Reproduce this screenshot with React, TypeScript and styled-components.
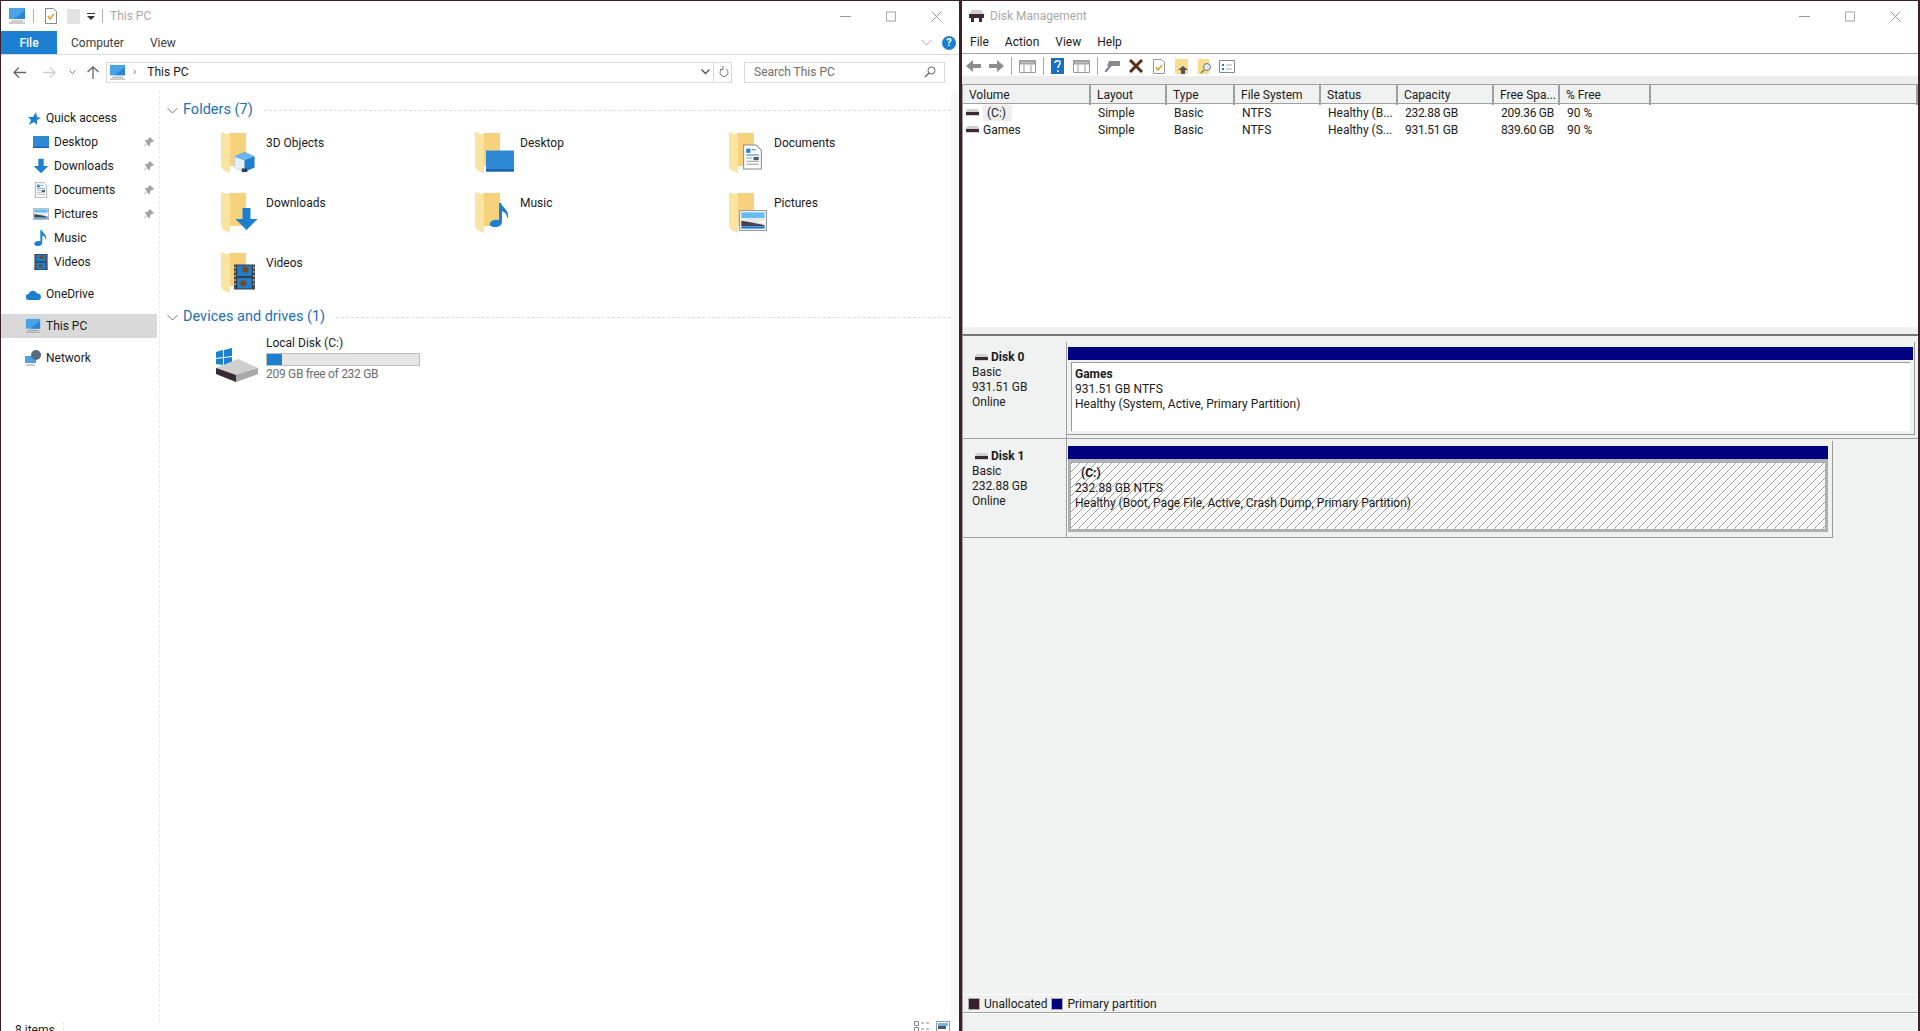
import React from 'react';
import styled, { createGlobalStyle } from 'styled-components';

const UI_FONT = '"Roboto", "Noto Sans", "Liberation Sans", sans-serif';
const EDGE = '#3b1f2b';
const LINE = '#a0a0a0';
const PANEL = '#f0f1f1';
const ACCENT = '#1c7fd0';

const GlobalStyle = createGlobalStyle`
  html, body { margin: 0; padding: 0; background: #fff; overflow: hidden; }
  body { font: 12px/16px ${UI_FONT}; color: #1b1b1b; }
  * { box-sizing: border-box; }
  svg { display: block; flex: none; }
`;

const Desk = styled.div`
  display: flex;
  width: 1920px;
  height: 1031px;
  overflow: hidden;
  background: ${EDGE};
`;

/* ---------- shared title bar ---------- */

const TitleBar = styled.div`
  display: flex;
  align-items: center;
  height: 30px;
  flex: none;
  background: #fff;
`;

const TitleText = styled.span<{ $left: number }>`
  color: #a9a9a9;
  margin-left: ${(p) => p.$left}px;
`;

const Controls = styled.div<{ $right: number }>`
  margin-left: auto;
  margin-right: ${(p) => p.$right}px;
  display: flex;
  gap: 35px;
  align-items: center;
`;

const TitleSep = styled.i`
  width: 1px;
  height: 14px;
  background: #b5b5b5;
  margin: 0 7px;
`;

const WindowControls = ({ right }: { right: number }) => (
  <Controls $right={right}>
    <svg width="11" height="11" viewBox="0 0 11 11"><path d="M0 5.5h11" stroke="#9a9a9a" /></svg>
    <svg width="10" height="11" viewBox="0 0 11 11"><path d="M.5.5h10v10H.5z" fill="none" stroke="#9a9a9a" /></svg>
    <svg width="11" height="11" viewBox="0 0 11 11"><path d="M.5.5l10 10M10.5.5l-10 10" stroke="#9a9a9a" /></svg>
  </Controls>
);

/* ---------- icons ---------- */

const Pc = ({ size = 18 }: { size?: number }) => (
  <svg width={size} height={size} viewBox="0 0 18 18">
    <rect x="1" y="1" width="16" height="11" fill="#4aa3e6" />
    <path d="M6 12L17 3v9z" fill="#2a86d4" />
    <path d="M3 14h12M1 16h16" stroke="#9b9b9b" />
  </svg>
);

const ArrowDown = () => <path d="M8 1h8v11h7L12 23 1 12h7z" fill={ACCENT} />;

type Kind = 'cube' | 'desktop' | 'docs' | 'down' | 'music' | 'pictures' | 'videos';

const Glyph = ({ kind, x = 0, y = 0, w = 24, h = 24 }: { kind: Kind; x?: number; y?: number; w?: number; h?: number }) => (
  <svg x={x} y={y} width={w} height={h} viewBox="0 0 24 24">
    {kind === 'cube' && (
      <>
        <path d="M1 6l11-5 11 5v12l-11 5-11-5z" fill={ACCENT} />
        <path d="M1 6l11 4v13L1 18z" fill="#e8eef2" />
        <path d="M1 6l11-5 11 5-11 4z" fill="#6db7ec" />
        <path d="M9 19h6v4H9z" fill="#2c3f58" />
      </>
    )}
    {kind === 'desktop' && (
      <>
        <rect x="0" y="3" width="24" height="18" fill="#2f8ad6" />
        <rect x="0" y="19" width="24" height="2" fill="#1a5fb0" />
      </>
    )}
    {kind === 'down' && <ArrowDown />}
    {kind === 'docs' && (
      <>
        <path d="M3.5.5h12l5 5v18h-17z" fill="#fff" stroke="#8a8a8a" />
        <path d="M6 4h4v4H6z" fill={ACCENT} />
        <path d="M11 5h4M6 10h12" stroke={ACCENT} />
        <path d="M6 13h6M6 16h12M6 19h12" stroke="#9a9a9a" />
        <path d="M13 12h5v3h-5z" fill="#4b5a70" />
      </>
    )}
    {kind === 'music' && (
      <path d="M11 0h2c1 4 8 7 7 14-1 2-1 1-1 0 0-3-3-5-5-6v11c0 3-3 5-7 5s-6-2-5-4c1-3 6-4 9-3z" fill={ACCENT} />
    )}
    {kind === 'pictures' && (
      <>
        <rect x=".5" y="3.500" width="23" height="17" fill="#fff" stroke="#9c9c9c" />
        <rect x="2" y="5" width="20" height="5" fill="#63bdf0" />
        <path d="M2 10h20v2l-6 1 6 2v2H2v-3l6-1z" fill="#e4e6e8" />
        <path d="M2 12l10 2 10 2v1H2z" fill="#4a434c" />
        <rect x="2" y="17" width="20" height="2" fill={ACCENT} />
      </>
    )}
    {kind === 'videos' && (
      <>
        <rect x="2" y="0" width="20" height="24" fill="#3c3c44" />
        <rect x="5" y="1" width="14" height="10" fill={ACCENT} />
        <rect x="5" y="13" width="14" height="10" fill={ACCENT} />
        <circle cx="13" cy="5" r="3" fill="#7a4a1e" />
        <circle cx="11" cy="18" r="3" fill="#7a4a1e" />
        <path d="M3 2v20M21 2v20" stroke="#d8d8d8" strokeDasharray="2 2" />
      </>
    )}
  </svg>
);

const overlays: Record<Kind, [number, number, number, number]> = {
  cube: [13, 21, 25, 22],
  desktop: [13, 17, 28, 28],
  docs: [13, 13, 25, 28],
  down: [15, 17, 25, 24],
  music: [15, 9, 24, 32],
  pictures: [12, 16, 28, 29],
  videos: [13, 13, 25, 28],
};

const FolderIcon = ({ kind }: { kind: Kind }) => {
  const [x, y, w, h] = overlays[kind];
  return (
    <svg width="47" height="48" viewBox="0 0 47 48">
      <path d="M10 3h17v33H10z" fill="#f7d27c" />
      <path d="M2 2l9 3v38l-7-3-2-4z" fill="#fbe3a3" />
      <Glyph kind={kind} x={x} y={y} w={w} h={h} />
    </svg>
  );
};

const NavGlyph = ({ kind }: { kind: Kind }) => <Glyph kind={kind} w={16} h={16} />;

const Pin = () => (
  <svg width="10" height="10" viewBox="0 0 10 10">
    <path d="M6 0l4 4-1 1-1-.5L6 7v2L5 9 3 7 .5 9.5 0 9l3-3L1 4V3h2l2.500-2L5 .8z" fill="#a3a3a3" />
  </svg>
);

const DiskDrive = () => (
  <svg width="53" height="48" viewBox="0 0 53 48">
    <path d="M3 17l7-2v7l-7 1zM11 15l8-2v8l-8 1zM3 24l7-1v7l-7-1zM11 23l8-1v9l-8-1z" fill={ACCENT} />
    <path d="M3 33l22-9 20 9v6L23 47 3 39z" fill="#cfcfcf" />
    <path d="M3 33l20 7v7L3 39z" fill="#3b2a33" />
    <path d="M23 40l22-7v6L23 47z" fill="#a9a9a9" />
  </svg>
);

const Chevron = ({ color = '#777' }: { color?: string }) => (
  <svg width="11" height="7" viewBox="0 0 11 7"><path d="M.5 1l5 5 5-5" fill="none" stroke={color} /></svg>
);

const SmallDisk = () => (
  <svg width="13" height="7" viewBox="0 0 13 7">
    <path d="M2 0h9l2 2v5H0V2z" fill="#d0d0d0" />
    <path d="M0 3h13v3H0z" fill="#3b2a33" />
  </svg>
);

/* ---------- explorer ---------- */

const Explorer = styled.section`
  width: 958px;
  height: 1043px;
  flex: none;
  display: flex;
  flex-direction: column;
  margin-top: 1px;
  margin-left: 1px;
  background: #fff;
`;

const QuickTool = styled.div`
  display: flex;
  align-items: center;
  padding-left: 7px;
`;

const QuickIcon = styled.svg<{ $left: number }>`
  margin-left: ${(p) => p.$left}px;
`;

const RibbonTabs = styled.div`
  display: flex;
  align-items: stretch;
  height: 24px;
  flex: none;
  border-bottom: 1px solid #dadada;
`;

const FileTab = styled.div`
  width: 56px;
  background: ${ACCENT};
  color: #fff;
  font-weight: 500;
  display: flex;
  align-items: center;
  justify-content: center;
`;

const RibbonTab = styled.div<{ $left: number }>`
  display: flex;
  align-items: center;
  color: #3d3d3d;
  margin-left: ${(p) => p.$left}px;
`;

const RibbonEnd = styled.div`
  margin-left: auto;
  display: flex;
  align-items: center;
  gap: 10px;
  padding-right: 3px;
`;

const Help = styled.span`
  width: 14px;
  height: 14px;
  border-radius: 50%;
  background: ${ACCENT};
  color: #fff;
  font: bold 11px/14px ${UI_FONT};
  text-align: center;
`;

const AddressRow = styled.div`
  display: flex;
  align-items: center;
  height: 36px;
  flex: none;
  padding: 0 12px 2px 12px;
`;

const NavArrow = styled.svg<{ $gap: number }>`
  margin-right: ${(p) => p.$gap}px;
`;

const AddressBox = styled.div`
  width: 626px;
  height: 21px;
  border: 1px solid #d9d9d9;
  display: flex;
  align-items: center;
  padding-left: 2px;
`;

const Crumb = styled.span`
  color: #777;
  margin: 0 11px 0 7px;
  font-size: 11px;
`;

const AddressEnd = styled.div`
  margin-left: auto;
  display: flex;
  align-items: center;
  height: 100%;
  gap: 3px;
  padding-right: 2px;
`;

const Refresh = styled.div`
  height: 100%;
  border-left: 1px solid #d9d9d9;
  padding-left: 5px;
  display: flex;
  align-items: center;
`;

const SearchBox = styled.div`
  width: 201px;
  height: 21px;
  margin-left: 12px;
  border: 1px solid #d9d9d9;
  display: flex;
  align-items: center;
  justify-content: space-between;
  padding: 0 8px 0 9px;
  color: #6d6d6d;
`;

const ExplorerBody = styled.div`
  flex: 1;
  display: flex;
  min-height: 0;
`;

const NavPane = styled.nav`
  width: 159px;
  flex: none;
  padding-top: 15px;
  border-right: 1px dashed #e8e8e8;
`;

const NavGroup = styled.div`
  margin-bottom: 8px;
`;

const NavItem = styled.div<{ $indent: number; $active?: boolean }>`
  display: flex;
  align-items: center;
  height: 24px;
  width: 156px;
  padding-left: ${(p) => p.$indent}px;
  gap: 5px;
  background: ${(p) => (p.$active ? '#d9d9d9' : 'transparent')};
`;

const PinSlot = styled.span`
  margin-left: auto;
  padding-right: 3px;
`;

const Content = styled.main`
  flex: 1;
  min-width: 0;
  padding-top: 9px;
  background: linear-gradient(to left, #f8f8f8 8px, #fff 8px);
`;

const GroupHeading = styled.div<{ $top?: number }>`
  display: flex;
  align-items: center;
  height: 20px;
  margin-top: ${(p) => p.$top ?? 0}px;
  padding: 0 8px 0 7px;
  font-size: 14.5px;
  color: #1d6fb8;
  gap: 5px;
`;

const HeadingRule = styled.i`
  flex: 1;
  margin-left: 6px;
  border-top: 1px dashed #dcdcdc;
`;

const FolderGrid = styled.div`
  display: grid;
  grid-template-columns: 254px 254px 1fr;
  grid-auto-rows: 48px;
  row-gap: 12px;
  margin-top: 10px;
  padding-left: 59px;
`;

const Tile = styled.div`
  display: flex;
`;

const TileName = styled.span`
  padding-top: 5px;
`;

const DriveTile = styled.div`
  display: flex;
  margin-top: 8px;
  padding-left: 53px;
`;

const DriveInfo = styled.div`
  display: flex;
  flex-direction: column;
`;

const DriveBar = styled.div`
  width: 154px;
  height: 13px;
  margin: 2px 0 0;
  border: 1px solid #bcbcbc;
  background: #e6e6e6;
`;

const DriveFill = styled.div`
  height: 100%;
  background: ${ACCENT};
`;

const DriveNote = styled.span`
  color: #6d6d6d;
  letter-spacing: -0.3px;
`;

const StatusBar = styled.footer`
  height: 22px;
  flex: none;
  display: flex;
  padding: 0 9px 0 14px;
`;

const StatusCount = styled.span`
  width: 49px;
  border-right: 1px dashed #e2e2e2;
`;

const ViewIcons = styled.div`
  margin-left: auto;
  margin-top: -1px;
  display: flex;
  gap: 6px;
`;

/* ---------- disk management ---------- */

const DiskWindow = styled.section`
  flex: 1;
  min-width: 0;
  margin-top: 1px;
  margin-left: 3px;
  margin-right: 2px;
  display: flex;
  flex-direction: column;
  background: #fff;
`;

const MmcIcon = styled.div`
  margin-left: 7px;
`;

const MenuBar = styled.div`
  height: 23px;
  flex: none;
  display: flex;
  align-items: center;
  padding-left: 8px;
  gap: 16px;
  border-bottom: 1px solid ${LINE};
`;

const Toolbar = styled.div`
  height: 22px;
  flex: none;
  display: flex;
  align-items: center;
  padding: 2px 0 0 4px;
`;

const ToolSep = styled.i`
  width: 1px;
  height: 18px;
  background: #a9a9a9;
  margin: 0 7px;
`;

const ToolIcon = styled.svg<{ $gap?: number }>`
  margin-right: ${(p) => p.$gap ?? 7}px;
`;

const ListBand = styled.div`
  height: 8px;
  flex: none;
  background: #ececec;
`;

const Volumes = styled.div`
  height: 252px;
  flex: none;
  border-top: 1px solid ${LINE};
  border-left: 1px solid ${LINE};
  border-bottom: 2px solid #777;
  background: linear-gradient(to top, #f0f0f0 7px, #fff 7px);
`;

const COLUMNS = '128px 76px 68px 86px 77px 96px 66px 91px 1fr';

const HeaderRow = styled.div`
  display: grid;
  grid-template-columns: ${COLUMNS};
  height: 19px;
  border-bottom: 1px solid ${LINE};
  background: ${PANEL};
`;

const HeaderCell = styled.div`
  padding-left: 6px;
  border-right: 2px solid ${LINE};
  white-space: nowrap;
  line-height: 20px;
`;

const VolumeRow = styled.div`
  display: grid;
  grid-template-columns: ${COLUMNS};
  height: 17px;
  align-items: center;
`;

const VolumeCell = styled.div<{ $tight?: boolean }>`
  padding-left: 7px;
  white-space: nowrap;
  color: #222;
  letter-spacing: ${(p) => (p.$tight ? '-0.3px' : '0')};
`;

const VolumeName = styled.div`
  display: flex;
  align-items: center;
  padding-left: 3px;
  gap: 4px;
`;

const Selected = styled.span`
  background: #eeeeee;
  padding: 0 6px 0 4px;
`;

const DiskArea = styled.div`
  flex: 1;
  min-height: 0;
  background: ${PANEL};
  border-left: 1px solid ${LINE};
  padding-top: 6px;
  display: flex;
  flex-direction: column;
`;

const DiskRow = styled.div<{ $ruled?: boolean; $height: number }>`
  display: flex;
  align-items: flex-start;
  height: ${(p) => p.$height}px;
  flex: none;
  border-bottom: ${(p) => (p.$ruled ? `1px solid ${LINE}` : 'none')};
`;

const DiskLabel = styled.div<{ $top: number; $closed?: boolean }>`
  width: 104px;
  height: 100%;
  flex: none;
  padding: ${(p) => p.$top}px 0 0 9px;
  line-height: 15px;
  border-right: 1px solid ${LINE};
  border-bottom: ${(p) => (p.$closed ? `1px solid ${LINE}` : 'none')};
`;

const DiskName = styled.div`
  display: flex;
  align-items: center;
  gap: 3px;
  padding-left: 3px;
  font-weight: 700;
  font-size: 12px;
`;

const Volume = styled.div<{ $width: number; $top: number; $height: number; $inset: number }>`
  width: ${(p) => p.$width}px;
  height: ${(p) => p.$height}px;
  margin-top: ${(p) => p.$top}px;
  padding: 5px ${(p) => p.$inset}px 0 1px;
  border-right: 1px solid #999;
  border-bottom: 1px solid #999;
  flex: none;
`;

const NavyBar = styled.div`
  height: 13px;
  background: #000080;
`;

const PlainPartition = styled.div`
  height: 69px;
  margin: 2px 3px 0 3px;
  padding: 4px 0 0 3px;
  background: #fff;
  border-top: 1px solid #999;
  border-left: 1px solid #999;
  line-height: 15px;
`;

const HatchPartition = styled.div`
  height: 73px;
  padding: 3px 0 0 4px;
  border: solid #b0b0b0;
  border-width: 4px 3px 3px 3px;
  line-height: 15px;
  background: repeating-linear-gradient(135deg, #9a9a9a 0 1px, #fff 1px 5.66px);
`;

const PartitionName = styled.div<{ $indent?: number }>`
  font-weight: 700;
  padding-left: ${(p) => p.$indent ?? 0}px;
`;

const Spring = styled.div`
  flex: 1;
`;

const Legend = styled.div`
  height: 19px;
  flex: none;
  display: flex;
  align-items: center;
  padding-left: 5px;
  gap: 4px;
  border-top: 1px solid #fff;
  border-bottom: 1px solid ${LINE};
`;

const Swatch = styled.span<{ $color: string }>`
  width: 12px;
  height: 12px;
  background: ${(p) => p.$color};
  border: 1px solid #aaa;
`;

const BottomStrip = styled.div`
  height: 18px;
  flex: none;
  background: ${PANEL};
  border-top: 1px solid #fff;
  margin-left: 1px;
`;

/* ---------- data ---------- */

const folders: { name: string; kind: Kind }[] = [
  { name: '3D Objects', kind: 'cube' },
  { name: 'Desktop', kind: 'desktop' },
  { name: 'Documents', kind: 'docs' },
  { name: 'Downloads', kind: 'down' },
  { name: 'Music', kind: 'music' },
  { name: 'Pictures', kind: 'pictures' },
  { name: 'Videos', kind: 'videos' },
];

const quickAccess: { name: string; kind: Kind; pinned?: boolean }[] = [
  { name: 'Desktop', kind: 'desktop', pinned: true },
  { name: 'Downloads', kind: 'down', pinned: true },
  { name: 'Documents', kind: 'docs', pinned: true },
  { name: 'Pictures', kind: 'pictures', pinned: true },
  { name: 'Music', kind: 'music' },
  { name: 'Videos', kind: 'videos' },
];

const headers = ['Volume', 'Layout', 'Type', 'File System', 'Status', 'Capacity', 'Free Spa...', '% Free', ''];

const rows = [
  { name: '(C:)', status: 'Healthy (B...', capacity: '232.88 GB', free: '209.36 GB' },
  { name: 'Games', status: 'Healthy (S...', capacity: '931.51 GB', free: '839.60 GB' },
];

const App = () => (
  <Desk>
    <GlobalStyle />

    <Explorer>
      <TitleBar>
        <QuickTool>
          <Pc />
          <TitleSep />
          <QuickIcon $left={3} width="14" height="16" viewBox="0 0 14 16">
            <path d="M1.500.5h8l3 3v12h-11z" fill="#fff" stroke="#888" />
            <path d="M4 8l2 3 4-5" fill="none" stroke="#e59a2c" strokeWidth="1.500" />
          </QuickIcon>
          <QuickIcon $left={9} width="13" height="15" viewBox="0 0 13 15">
            <rect width="13" height="15" fill="#e3e3e3" />
          </QuickIcon>
          <QuickIcon $left={7} width="8" height="7" viewBox="0 0 8 7">
            <path d="M0 0h8v1H0zM0 3h8L4 7z" fill="#333" />
          </QuickIcon>
          <TitleSep />
        </QuickTool>
        <TitleText $left={0}>This PC</TitleText>
        <WindowControls right={17} />
      </TitleBar>

      <RibbonTabs>
        <FileTab>File</FileTab>
        <RibbonTab $left={14}>Computer</RibbonTab>
        <RibbonTab $left={26}>View</RibbonTab>
        <RibbonEnd>
          <Chevron color="#a5a5a5" />
          <Help>?</Help>
        </RibbonEnd>
      </RibbonTabs>

      <AddressRow>
        <NavArrow $gap={17} width="13" height="11" viewBox="0 0 13 11">
          <path d="M6 .5L1 5.500l5 5M1 5.500h12" fill="none" stroke="#666" strokeWidth="1.300" />
        </NavArrow>
        <NavArrow $gap={13} width="13" height="11" viewBox="0 0 13 11">
          <path d="M7 .5l5 5-5 5M12 5.500H0" fill="none" stroke="#cfcfcf" strokeWidth="1.300" />
        </NavArrow>
        <NavArrow $gap={11} width="7" height="5" viewBox="0 0 7 5">
          <path d="M.5.5l3 3 3-3" fill="none" stroke="#777" />
        </NavArrow>
        <NavArrow $gap={7} width="12" height="13" viewBox="0 0 12 13">
          <path d="M.5 6l5.500-5 5.500 5M6 1v12" fill="none" stroke="#666" strokeWidth="1.300" />
        </NavArrow>
        <AddressBox>
          <Pc size={17} />
          <Crumb>›</Crumb>
          This PC
          <AddressEnd>
            <svg width="9" height="6" viewBox="0 0 9 6"><path d="M.5.5l4 4 4-4" fill="none" stroke="#555" strokeWidth="1.400" /></svg>
            <Refresh>
              <svg width="10" height="12" viewBox="0 0 10 12">
                <path d="M3 3a4 4 0 1 0 4 0M4 0v3.500H1" fill="none" stroke="#777" />
              </svg>
            </Refresh>
          </AddressEnd>
        </AddressBox>
        <SearchBox>
          Search This PC
          <svg width="12" height="12" viewBox="0 0 12 12">
            <circle cx="7.500" cy="4.500" r="3.500" fill="none" stroke="#666" />
            <path d="M5 7l-4 4" stroke="#666" strokeWidth="1.500" />
          </svg>
        </SearchBox>
      </AddressRow>

      <ExplorerBody>
        <NavPane>
          <NavGroup>
            <NavItem $indent={27}>
              <svg width="13" height="13" viewBox="0 0 13 13">
                <path d="M8 0l1 5 4 1-4 2 0 5-3-3-5 3 2-5-3-3h5z" fill={ACCENT} />
              </svg>
              Quick access
            </NavItem>
            {quickAccess.map((item) => (
              <NavItem key={item.name} $indent={32}>
                <NavGlyph kind={item.kind} />
                {item.name}
                {item.pinned && <PinSlot><Pin /></PinSlot>}
              </NavItem>
            ))}
          </NavGroup>
          <NavGroup>
            <NavItem $indent={25}>
              <svg width="15" height="11" viewBox="0 0 15 11">
                <path d="M3 11a3 3 0 0 1-.5-6C3.500 1.500 9 0 11 4.500c2-.5 4 1 4 3.500 0 1.500-1 3-2.500 3z" fill={ACCENT} />
              </svg>
              OneDrive
            </NavItem>
          </NavGroup>
          <NavGroup>
            <NavItem $indent={24} $active>
              <Pc size={16} />
              This PC
            </NavItem>
          </NavGroup>
          <NavItem $indent={24}>
            <svg width="16" height="16" viewBox="0 0 16 16">
              <rect x="0" y="6" width="11" height="7" fill="#4aa3e6" />
              <circle cx="11" cy="5" r="5" fill="#5a6b80" />
              <path d="M1 15h9" stroke="#999" />
            </svg>
            Network
          </NavItem>
        </NavPane>

        <Content>
          <GroupHeading>
            <Chevron />
            Folders (7)
            <HeadingRule />
          </GroupHeading>
          <FolderGrid>
            {folders.map((f) => (
              <Tile key={f.name}>
                <FolderIcon kind={f.kind} />
                <TileName>{f.name}</TileName>
              </Tile>
            ))}
          </FolderGrid>
          <GroupHeading $top={9}>
            <Chevron />
            Devices and drives (1)
            <HeadingRule />
          </GroupHeading>
          <DriveTile>
            <DiskDrive />
            <DriveInfo>
              Local Disk (C:)
              <DriveBar>
                <DriveFill style={{ width: `${((232 - 209) / 232) * 100}%` }} />
              </DriveBar>
              <DriveNote>209 GB free of 232 GB</DriveNote>
            </DriveInfo>
          </DriveTile>
        </Content>
      </ExplorerBody>

      <StatusBar>
        <StatusCount>8 items</StatusCount>
        <ViewIcons>
          <svg width="16" height="14" viewBox="0 0 16 14">
            <path d="M.5.5h4v4h-4zM.5 6.500h4v4h-4z" fill="none" stroke="#888" />
            <path d="M7 2h3M12 2h3M7 8h3M12 8h3" stroke="#888" />
          </svg>
          <svg width="14" height="14" viewBox="0 0 14 14">
            <rect x=".5" y=".5" width="13" height="13" fill="#fff" stroke="#999" />
            <rect x="2" y="2" width="10" height="3" fill="#63bdf0" />
            <rect x="2" y="5" width="8" height="3" fill="#555" />
          </svg>
        </ViewIcons>
      </StatusBar>
    </Explorer>

    <DiskWindow>
      <TitleBar>
        <MmcIcon>
          <svg width="15" height="14" viewBox="0 0 15 14">
            <path d="M3 1h9l3 4v4H0V5z" fill="#cfcfcf" />
            <path d="M0 5h15v4H0z" fill="#3b2a33" />
            <path d="M2 9h3v4H2zM10 9h3v4h-3z" fill="#3b2a33" />
          </svg>
        </MmcIcon>
        <TitleText $left={6}>Disk Management</TitleText>
        <WindowControls right={17} />
      </TitleBar>

      <MenuBar>
        <span>File</span>
        <span>Action</span>
        <span>View</span>
        <span>Help</span>
      </MenuBar>

      <Toolbar>
        <ToolIcon $gap={8} width="15" height="14" viewBox="0 0 15 14"><path d="M7 1L0 7l7 6V9h8V5H7z" fill="#8e8e8e" /></ToolIcon>
        <ToolIcon $gap={0} width="15" height="14" viewBox="0 0 15 14"><path d="M8 1l7 6-7 6V9H0V5h8z" fill="#8e8e8e" /></ToolIcon>
        <ToolSep />
        <ToolIcon $gap={0} width="17" height="13" viewBox="0 0 17 13">
          <path d="M.5.5h16v12H.5z" fill="#fff" stroke="#999" />
          <path d="M1 1h15v3H1zM5 5v7M12 5v7" fill="#bbb" stroke="#999" />
        </ToolIcon>
        <ToolSep />
        <ToolIcon $gap={9} width="13" height="16" viewBox="0 0 13 16">
          <rect width="13" height="16" fill="#1a6fc0" />
          <path d="M4 5c0-3 6-3 5 0 0 2-2 2-2 5M7 12v2" fill="none" stroke="#fff" strokeWidth="1.500" />
        </ToolIcon>
        <ToolIcon $gap={0} width="17" height="13" viewBox="0 0 17 13">
          <path d="M.5.5h16v12H.5z" fill="#fff" stroke="#999" />
          <path d="M1 1h15v3H1zM5 5v7M12 5v7" fill="#bbb" stroke="#999" />
        </ToolIcon>
        <ToolSep />
        <ToolIcon $gap={9} width="15" height="12" viewBox="0 0 15 12">
          <path d="M4 1h11v5H2z" fill="#8a8a8a" />
          <path d="M0 12l6-7" stroke="#7a7a9a" strokeWidth="2" />
        </ToolIcon>
        <ToolIcon $gap={10} width="14" height="14" viewBox="0 0 14 14">
          <path d="M1 1l12 12M13 1L1 13" stroke="#5a2c14" strokeWidth="3" />
        </ToolIcon>
        <ToolIcon $gap={10} width="12" height="15" viewBox="0 0 12 15">
          <path d="M.5.5h8l3 3v11H.5z" fill="#fff" stroke="#999" />
          <path d="M3 8l2 3 4-5" fill="none" stroke="#e59a2c" strokeWidth="1.500" />
        </ToolIcon>
        <ToolIcon $gap={9} width="14" height="15" viewBox="0 0 14 15">
          <rect width="13" height="15" fill="#f9dc8f" />
          <path d="M8 7l5 4h-3v4H6v-4H3z" fill="#555" />
        </ToolIcon>
        <ToolIcon $gap={7} width="14" height="15" viewBox="0 0 14 15">
          <rect width="11" height="15" fill="#f9dc8f" />
          <circle cx="9" cy="8" r="3.500" fill="#dfe8ef" stroke="#777" />
          <path d="M6 11l-3 3" stroke="#777" strokeWidth="1.500" />
        </ToolIcon>
        <ToolIcon width="16" height="13" viewBox="0 0 16 13">
          <path d="M.5.5h15v12H.5z" fill="#fff" stroke="#888" />
          <path d="M3 4h2v2H3zM3 8h2v2H3z" fill={ACCENT} />
          <path d="M7 5h6M7 9h6" stroke="#aaa" />
        </ToolIcon>
      </Toolbar>

      <ListBand />

      <Volumes>
        <HeaderRow>
          {headers.map((h) => <HeaderCell key={h}>{h}</HeaderCell>)}
        </HeaderRow>
        {rows.map((r) => (
          <VolumeRow key={r.name}>
            <VolumeName>
              <SmallDisk />
              {r.name === '(C:)' ? <Selected>{r.name}</Selected> : r.name}
            </VolumeName>
            <VolumeCell>Simple</VolumeCell>
            <VolumeCell>Basic</VolumeCell>
            <VolumeCell>NTFS</VolumeCell>
            <VolumeCell>{r.status}</VolumeCell>
            <VolumeCell $tight>{r.capacity}</VolumeCell>
            <VolumeCell $tight>{r.free}</VolumeCell>
            <VolumeCell>90 %</VolumeCell>
          </VolumeRow>
        ))}
      </Volumes>

      <DiskArea>
        <DiskRow $ruled $height={97}>
          <DiskLabel $top={8}>
            <DiskName><SmallDisk />Disk 0</DiskName>
            <div>Basic</div>
            <div>931.51 GB</div>
            <div>Online</div>
          </DiskLabel>
          <Volume $width={848} $top={0} $height={93} $inset={1}>
            <NavyBar />
            <PlainPartition>
              <PartitionName>Games</PartitionName>
              <div>931.51 GB NTFS</div>
              <div>Healthy (System, Active, Primary Partition)</div>
            </PlainPartition>
          </Volume>
        </DiskRow>
        <DiskRow $height={99}>
          <DiskLabel $top={10} $closed>
            <DiskName><SmallDisk />Disk 1</DiskName>
            <div>Basic</div>
            <div>232.88 GB</div>
            <div>Online</div>
          </DiskLabel>
          <Volume $width={766} $top={2} $height={97} $inset={4}>
            <NavyBar />
            <HatchPartition>
              <PartitionName $indent={6}>(C:)</PartitionName>
              <div>232.88 GB NTFS</div>
              <div>Healthy (Boot, Page File, Active, Crash Dump, Primary Partition)</div>
            </HatchPartition>
          </Volume>
        </DiskRow>
        <Spring />
        <Legend>
          <Swatch $color={EDGE} />
          <span>Unallocated</span>
          <Swatch $color="#000080" />
          <span>Primary partition</span>
        </Legend>
        <BottomStrip />
      </DiskArea>
    </DiskWindow>
  </Desk>
);

export default App;
